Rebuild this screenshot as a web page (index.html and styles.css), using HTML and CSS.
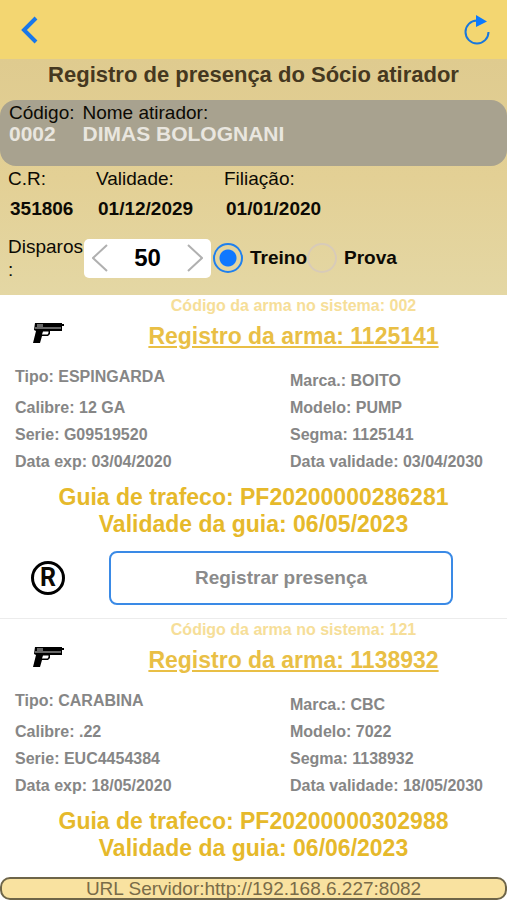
FILE: index.html
```
<!DOCTYPE html>
<html lang="pt-BR">
  <head>
    <title>Registro de presença</title>
    <meta charset="UTF-8" />
    <meta name="viewport" content="width=device-width, initial-scale=1" />
    <link rel="stylesheet" href="styles.css">
  </head>

  <body>
    <header class="topbar">
      <button class="icon-btn" aria-label="Voltar">
        <svg width="20" height="30" viewBox="0 0 20 30">
          <path d="M16 3 L4 15 L16 27" fill="none" stroke="#1877ea" stroke-width="4" />
        </svg>
      </button>
      <button class="icon-btn" aria-label="Atualizar">
        <svg width="28" height="30" viewBox="0 0 28 30">
          <path d="M14 5.500 A11.500 11.500 0 1 0 25.500 17" fill="none" stroke="#1877dd" stroke-width="2" />
          <path d="M13 0 L24 6.500 L13 12 Z" fill="#0a7aff" />
        </svg>
      </button>
    </header>

    <section class="panel">
      <h1 class="title">Registro de presença do Sócio atirador</h1>
      <div class="member">
        <div>
          <span class="label">Código:</span>
          <strong>0002</strong>
        </div>
        <div>
          <span class="label">Nome atirador:</span>
          <strong>DIMAS BOLOGNANI</strong>
        </div>
      </div>
      <div class="dates">
        <div>
          <span class="label">C.R:</span>
          <strong>351806</strong>
        </div>
        <div>
          <span class="label">Validade:</span>
          <strong>01/12/2029</strong>
        </div>
        <div>
          <span class="label">Filiação:</span>
          <strong>01/01/2020</strong>
        </div>
      </div>
      <div class="shots">
        <label class="shots-label" for="shots">Disparos :</label>
        <div class="stepper">
          <button class="step" aria-label="Menos">
            <svg width="16" height="28" viewBox="0 0 16 28">
              <path d="M15 1 L1 14 L15 27" fill="none" stroke="#b0b0b0" stroke-width="2" />
            </svg>
          </button>
          <input class="step-value" id="shots" type="text" value="50" />
          <button class="step" aria-label="Mais">
            <svg width="16" height="28" viewBox="0 0 16 28">
              <path d="M1 1 L15 14 L1 27" fill="none" stroke="#b0b0b0" stroke-width="2" />
            </svg>
          </button>
        </div>
        <label class="radio"><input type="radio" name="kind" checked />Treino</label>
        <label class="radio"><input type="radio" name="kind" />Prova</label>
      </div>
    </section>

    <main class="list">
      <article class="gun">
        <div class="gun-head">
          <svg class="gun-icon" width="32" height="22" viewBox="0 0 32 22">
            <path d="M3 1 H30 V2 H32 V4 H30 V9 H18 V12 L16 14 H10 L8 21 H1 L4 9 L2 8 Z M11 9.500 L10 12.500 H15.500 L16.500 11 V9.500 Z" fill="#000" fill-rule="evenodd" />
            <path d="M3 6 H29 M6 2 V5 M8 2 V5 M10 2 V5" fill="none" stroke="#ccc" stroke-width="1" />
          </svg>
          <div class="gun-names">
            <p class="gun-code">Código da arma no sistema: 002</p>
            <a class="gun-link" href="#">Registro da arma: 1125141</a>
          </div>
        </div>
        <div class="specs">
          <ul>
            <li class="kind">Tipo: ESPINGARDA</li>
            <li>Calibre: 12 GA</li>
            <li>Serie: G09519520</li>
            <li>Data exp: 03/04/2020</li>
          </ul>
          <ul>
            <li>Marca.: BOITO</li>
            <li>Modelo: PUMP</li>
            <li>Segma: 1125141</li>
            <li>Data validade: 03/04/2030</li>
          </ul>
        </div>
        <p class="guide">Guia de trafeco: PF20200000286281<br />Validade da guia: 06/05/2023</p>
        <div class="actions">
          <span class="mark">R</span>
          <button class="register">Registrar presença</button>
        </div>
      </article>

      <article class="gun">
        <div class="gun-head">
          <svg class="gun-icon" width="32" height="22" viewBox="0 0 32 22">
            <path d="M3 1 H30 V2 H32 V4 H30 V9 H18 V12 L16 14 H10 L8 21 H1 L4 9 L2 8 Z M11 9.500 L10 12.500 H15.500 L16.500 11 V9.500 Z" fill="#000" fill-rule="evenodd" />
            <path d="M3 6 H29 M6 2 V5 M8 2 V5 M10 2 V5" fill="none" stroke="#ccc" stroke-width="1" />
          </svg>
          <div class="gun-names">
            <p class="gun-code">Código da arma no sistema: 121</p>
            <a class="gun-link" href="#">Registro da arma: 1138932</a>
          </div>
        </div>
        <div class="specs">
          <ul>
            <li class="kind">Tipo: CARABINA</li>
            <li>Calibre: .22</li>
            <li>Serie: EUC4454384</li>
            <li>Data exp: 18/05/2020</li>
          </ul>
          <ul>
            <li>Marca.: CBC</li>
            <li>Modelo: 7022</li>
            <li>Segma: 1138932</li>
            <li>Data validade: 18/05/2030</li>
          </ul>
        </div>
        <p class="guide">Guia de trafeco: PF20200000302988<br />Validade da guia: 06/06/2023</p>
      </article>
    </main>

    <footer class="server">URL Servidor:http://192.168.6.227:8082</footer>
  </body>
</html>
```
FILE: styles.css
```
* {
  box-sizing: border-box;
  margin: 0;
  padding: 0;
}

body {
  min-height: 100vh;
  display: flex;
  flex-direction: column;
  background: #fff;
  font-family: "Liberation Sans", Arial, sans-serif;
  font-size: 19px;
  color: #0c0a04;
}

button {
  border: none;
  background: none;
  font-family: inherit;
  cursor: pointer;
}

ul {
  list-style: none;
}

.topbar {
  height: 59px;
  padding: 0 16px 0 20px;
  display: flex;
  align-items: center;
  justify-content: space-between;
  background: #f3d671;
}

.icon-btn {
  display: flex;
}

.panel {
  padding-bottom: 14px;
  background: linear-gradient(#dfcb8f, #e3d095 50%, #e4d7a4);
}

.title {
  padding-bottom: 9px;
  line-height: 32px;
  font-size: 22px;
  text-align: center;
  color: #453820;
}

.member {
  padding: 3px 9px 21px;
  display: flex;
  gap: 8px;
  border-radius: 16px;
  background: #a8a28f;
}

.member strong {
  display: block;
  line-height: 22px;
  font-size: 21px;
  color: #e9e6df;
}

.label {
  display: block;
  line-height: 20px;
}

.dates {
  padding: 3px 8px 0;
  display: grid;
  grid-template-columns: 88px 128px 1fr;
}

.dates strong {
  display: block;
  padding: 10px 2px 0;
  line-height: 20px;
}

.shots {
  padding: 16px 8px 0;
  display: flex;
  align-items: center;
}

.shots-label {
  width: 76px;
  line-height: 23px;
}

.stepper {
  width: 127px;
  height: 39px;
  margin-right: 2px;
  padding: 0 8px;
  display: flex;
  align-items: center;
  border-radius: 5px;
  background: #fff;
}

.step {
  display: flex;
}

.step-value {
  width: 100%;
  min-width: 0;
  border: none;
  background: none;
  font: bold 24px "Liberation Sans", Arial, sans-serif;
  text-align: center;
}

.radio {
  display: flex;
  align-items: center;
  gap: 7px;
  font-weight: bold;
}

.radio input {
  appearance: none;
  width: 30px;
  height: 30px;
  border: 2px solid #d8cbb8;
  border-radius: 50%;
}

.radio input:checked {
  border-color: #1f80ee;
  background: radial-gradient(circle, #0f78ff 8px, transparent 9px);
}

.gun {
  padding-bottom: 13px;
  border-bottom: 1px solid #ececec;
}

.gun:last-child {
  border-bottom: none;
}

.gun-head {
  padding-left: 32px;
  display: flex;
  align-items: center;
  gap: 16px;
}

.gun-icon {
  margin-top: 14px;
}

.gun-names {
  flex: 1;
  text-align: center;
}

.gun-code {
  line-height: 21px;
  font-size: 16px;
  font-weight: bold;
  color: #f6de98;
}

.gun-link {
  display: block;
  line-height: 41px;
  font-size: 23px;
  font-weight: bold;
  color: #e9bf45;
}

.specs {
  padding: 6px 15px 0;
  display: grid;
  grid-template-columns: 275px 1fr;
  align-items: end;
  line-height: 27px;
  font-size: 16px;
  font-weight: bold;
  color: #868686;
}

.kind {
  margin-bottom: 4px;
}

.guide {
  padding-top: 9px;
  line-height: 27px;
  font-size: 23px;
  font-weight: bold;
  text-align: center;
  color: #e6b92b;
}

.actions {
  padding: 13px 54px 0 31px;
  display: flex;
  align-items: center;
  gap: 44px;
}

.mark {
  width: 34px;
  height: 34px;
  border: 3px solid #000;
  border-radius: 50%;
  line-height: 28px;
  font-family: Roboto, sans-serif;
  font-size: 25px;
  font-weight: bold;
  text-align: center;
}

.register {
  flex: 1;
  height: 54px;
  border: 2px solid #3a8ae6;
  border-radius: 8px;
  font-size: 19px;
  font-weight: bold;
  color: #8b8b8b;
}

.server {
  margin-top: auto;
  border: 2px solid #6e6549;
  border-radius: 10px;
  background: #f9e2a0;
  line-height: 19px;
  text-align: center;
  color: #7a6c48;
}
```
